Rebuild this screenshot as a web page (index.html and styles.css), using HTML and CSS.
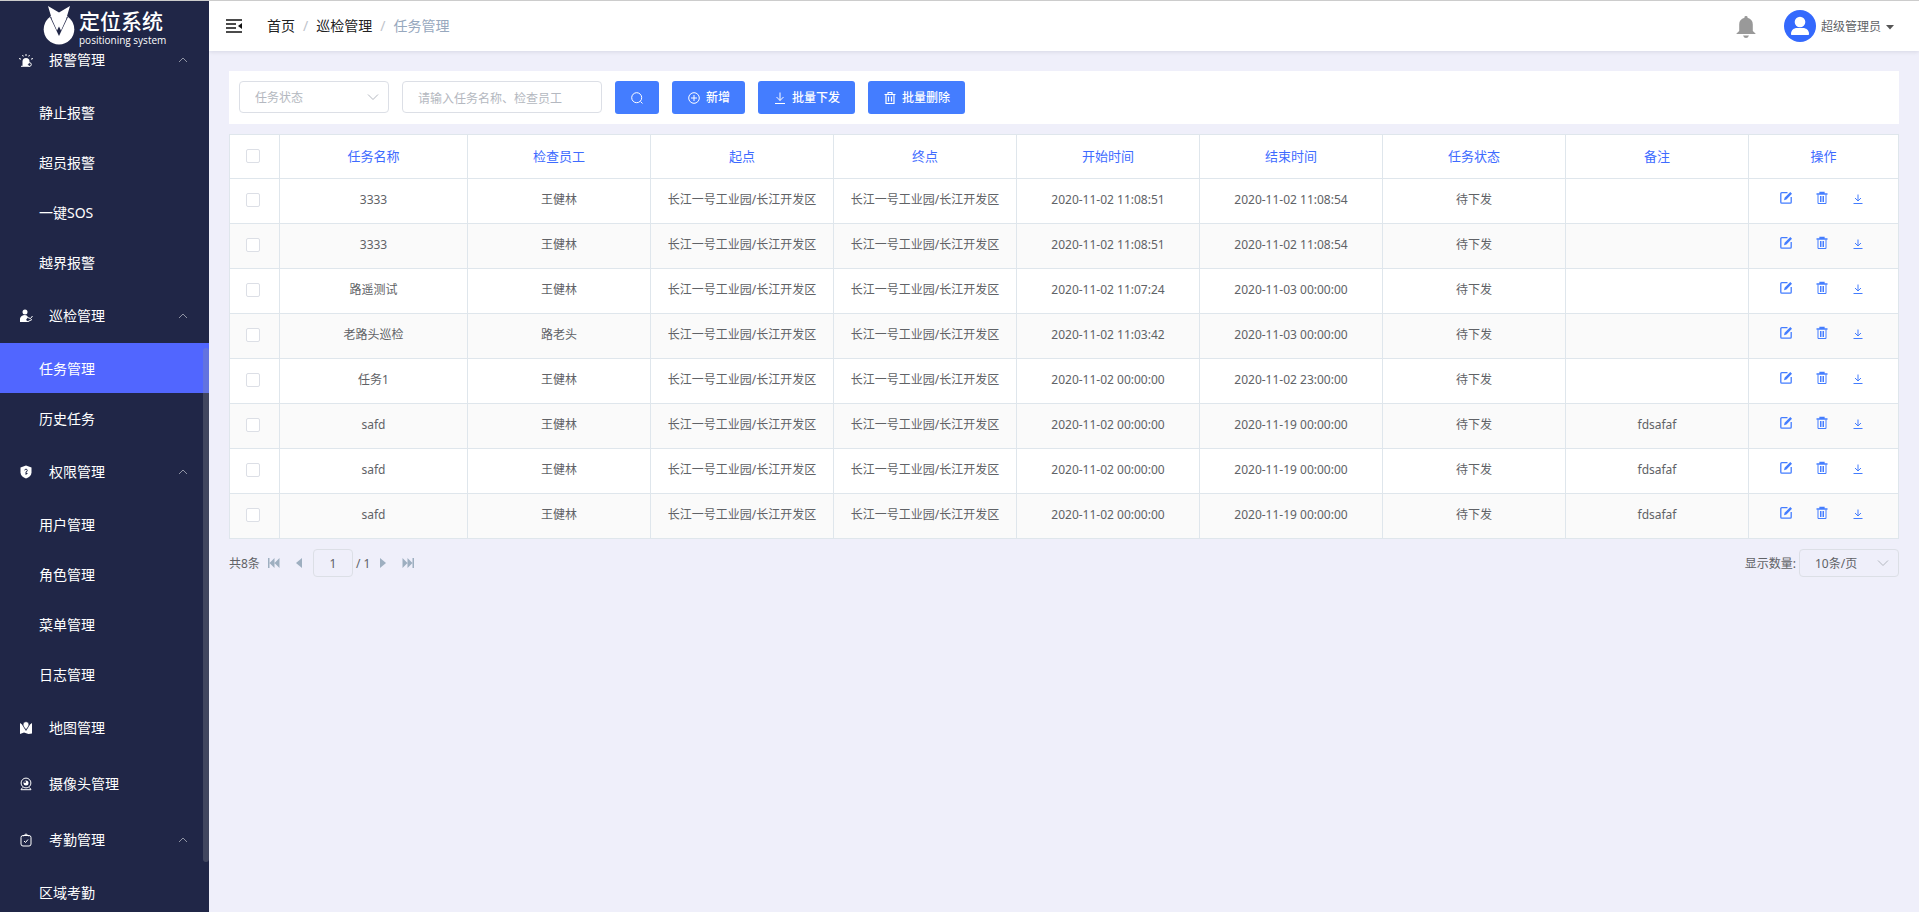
FILE: index.html
```html
<!DOCTYPE html>
<html lang="zh-CN">
<head>
<meta charset="utf-8">
<title>定位系统</title>
<link rel="stylesheet" href="styles.css">
</head>
<body>
<svg class="sprite" aria-hidden="true">
  <symbol id="up" viewBox="0 0 12 12"><path d="M2 8l4-4 4 4" fill="none" stroke="currentColor"/></symbol>
  <symbol id="down" viewBox="0 0 12 12"><path d="M1 3.500l5 5 5-5" fill="none" stroke="currentColor"/></symbol>
  <symbol id="edit" viewBox="0 0 14 14"><path d="M8.500 1.700H2.800a1 1 0 0 0-1 1v8.500a1 1 0 0 0 1 1h8.400a1 1 0 0 0 1-1V6" fill="none" stroke="currentColor" stroke-width="1.300"/><path d="M5 9.200l.6-2.500 5.700-5.600 1.700 1.700-5.600 5.700z" fill="currentColor"/></symbol>
  <symbol id="trash" viewBox="0 0 14 14"><path d="M1.500 3.500h11M5 3.500v-2h4v2M3 3.500v9h8v-9M5.500 5.500v5M8.500 5.500v5" fill="none" stroke="currentColor" stroke-width="1.200"/></symbol>
  <symbol id="bin" viewBox="0 0 14 14"><path d="M1.500 3h11M5 3V1.500h4V3" fill="none" stroke="currentColor" stroke-width="1.300"/><path d="M3 3.500v9h8v-9M5.500 5v6M7 5v6M8.500 5v6" fill="none" stroke="currentColor"/></symbol>
  <symbol id="load" viewBox="0 0 14 14"><path d="M7 1.500v8M3.500 6L7 9.500 10.500 6M2 12.500h10" fill="none" stroke="currentColor"/></symbol>
  <symbol id="send" viewBox="0 0 14 14"><path d="M7 3.500v6M4 7l3 3 3-3M2.500 12.500h9" fill="none" stroke="currentColor"/></symbol>
</svg>
<div class="app">
  <aside class="sidebar">
    <div class="logo">
      <svg class="logo-mark" viewBox="0 0 32 40"><circle cx="16" cy="23.300" r="15.300" fill="#fff"/><path d="M7 11L16 30l9-19z" fill="#202647"/><path d="M5 0l11 6.500L27 0l-4 13.500-5 11-2-4-2 4-5-11z" fill="#fff"/></svg>
      <div class="logo-text"><strong>定位系统</strong><span>positioning system</span></div>
    </div>
    <nav class="menu">
      <a class="group" href="#"><svg class="mi" viewBox="0 0 14 14"><path d="M3.500 13V8.500a3.500 3.500 0 0 1 7 0V13z" fill="#fff"/><path d="M2 13.300h9M7 1v2M3.500 2l.8 1.500M10.500 2l-.8 1.500M0 5.500l2 .7M14 5.500l-2 .7" stroke="#fff"/><circle cx="10.500" cy="11.500" r="1.800" fill="#202647" stroke="#fff"/></svg>报警管理<svg class="arrow"><use href="#up"/></svg></a>
      <a class="item" href="#">静止报警</a>
      <a class="item" href="#">超员报警</a>
      <a class="item" href="#">一键SOS</a>
      <a class="item" href="#">越界报警</a>
      <a class="group" href="#"><svg class="mi" viewBox="0 0 14 14"><circle cx="6" cy="3" r="2.500" fill="#fff"/><path d="M1 13V9.500Q2 6 6 6q2 0 3 2l-2 3 3 2z" fill="#fff"/><path d="M8.500 8.500l3 1 2-2.500M9 12.500l4-2" fill="none" stroke="#fff"/></svg>巡检管理<svg class="arrow"><use href="#up"/></svg></a>
      <a class="item active" href="#">任务管理</a>
      <a class="item" href="#">历史任务</a>
      <a class="group" href="#"><svg class="mi" viewBox="0 0 14 14"><path d="M7 .5l5.500 2v5c0 3-2.500 5-5.500 6-3-1-5.500-3-5.500-6v-5z" fill="#fff"/><path d="M5.700 5.300a1.300 1.300 0 1 1 1.300 1.500v3M7 8.500h1.500" fill="none" stroke="#202647"/></svg>权限管理<svg class="arrow"><use href="#up"/></svg></a>
      <a class="item" href="#">用户管理</a>
      <a class="item" href="#">角色管理</a>
      <a class="item" href="#">菜单管理</a>
      <a class="item" href="#">日志管理</a>
      <a class="group" href="#"><svg class="mi" viewBox="0 0 14 14"><path d="M1 2l2 1.500 4 6.500 4-6.500L13 2v10.500L9.500 13 5 11.500 1 13z" fill="#fff"/><path d="M7 8.500C5 6.500 4.200 5 4.200 3.500a2.800 2.800 0 0 1 5.600 0C9.800 5 9 6.500 7 8.500z" fill="#fff" stroke="#202647" stroke-width=".5"/></svg>地图管理</a>
      <a class="group" href="#"><svg class="mi" viewBox="0 0 14 14"><circle cx="7" cy="6" r="4.900" fill="none" stroke="#fff"/><circle cx="7" cy="6" r="2.500" fill="#fff"/><circle cx="6" cy="5" r="1" fill="#202647"/><path d="M3.500 10.500L2 12.700h10l-1.500-2.200" fill="none" stroke="#fff"/></svg>摄像头管理</a>
      <a class="group" href="#"><svg class="mi" viewBox="0 0 14 14"><rect x="2" y="2.500" width="10" height="10.500" rx="2" fill="none" stroke="#fff"/><path d="M4.500 3L7 .8 9.500 3M5 8l1.500 1.500L9 6.500" fill="none" stroke="#fff"/></svg>考勤管理<svg class="arrow"><use href="#up"/></svg></a>
      <a class="item" href="#">区域考勤</a>
    </nav>
    <div class="thumb"></div>
  </aside>
  <div class="page">
    <header class="topbar">
      <button class="plain fold" aria-label="收起菜单"><svg viewBox="0 0 16 14"><path d="M0 1h16M0 5h10M0 9h10M0 13h16" stroke="#111" stroke-width="1.500"/><path d="M16 4v6l-4-3z" fill="#111"/></svg></button>
      <nav class="crumbs"><a href="#">首页</a><i>/</i><a href="#">巡检管理</a><i>/</i><span>任务管理</span></nav>
      <button class="plain bell" aria-label="通知"><svg viewBox="0 0 20 22"><path d="M10 0a1.500 1.500 0 0 1 1.500 1.800C15 2.700 16.800 5 16.800 8.500V15l2.700 2.500V18H.5v-.5L3.200 15V8.500C3.200 5 5 2.700 8.500 1.800A1.500 1.500 0 0 1 10 0zM7 19.500h6Q12 22 10 22t-3-2.500z" fill="#999"/></svg></button>
      <button class="plain user"><svg class="avatar" viewBox="0 0 32 32"><circle cx="16" cy="16" r="16" fill="#3469fd"/><circle cx="16" cy="12" r="5.300" fill="#fff"/><path d="M7 24c0-4 3-6 6-6h6c3 0 6 2 6 6 0 .7-.4 1-1 1H8c-.6 0-1-.3-1-1z" fill="#fff"/></svg><span>超级管理员</span><svg class="caret" viewBox="0 0 8 6"><path d="M0 1h8L4 5.500z" fill="#555"/></svg></button>
    </header>
    <main class="content">
      <form class="toolbar">
        <div class="select status"><select aria-label="任务状态"><option>任务状态</option></select><svg><use href="#down"/></svg></div>
        <input class="search" type="text" aria-label="关键词" placeholder="请输入任务名称、检查员工">
        <button class="btn" type="button" aria-label="搜索"><svg viewBox="0 0 14 14"><circle cx="6.700" cy="6.700" r="5" fill="none" stroke="#fff"/><path d="M10.500 10.500l2 2" stroke="#fff"/></svg></button>
        <button class="btn" type="button"><svg viewBox="0 0 14 14"><circle cx="7" cy="7" r="5.300" fill="none" stroke="#fff"/><path d="M4 7h6M7 4v6" stroke="#fff"/></svg>新增</button>
        <button class="btn" type="button"><svg><use href="#load"/></svg>批量下发</button>
        <button class="btn" type="button"><svg><use href="#trash"/></svg>批量删除</button>
      </form>
      <table class="grid">
        <colgroup><col class="c-check"><col class="c-name"><col><col><col><col><col><col><col><col class="c-ops"></colgroup>
        <thead><tr><th><input type="checkbox" aria-label="全选"></th><th>任务名称</th><th>检查员工</th><th>起点</th><th>终点</th><th>开始时间</th><th>结束时间</th><th>任务状态</th><th>备注</th><th>操作</th></tr></thead>
        <tbody id="rows"></tbody>
      </table>
      <footer class="pager">
        <span class="total">共8条</span>
        <button class="plain" aria-label="首页"><svg viewBox="0 0 12 10"><path d="M0 0h1.500v10H0zM6.500 0v10L1.500 5zM11.500 0v10l-5-5z"/></svg></button>
        <button class="plain prev" aria-label="上一页"><svg viewBox="0 0 12 10"><path d="M9 0v10L3 5z"/></svg></button>
        <input class="num" type="text" value="1" aria-label="页码">
        <span>/ 1</span>
        <button class="plain next" aria-label="下一页"><svg viewBox="0 0 12 10"><path d="M3 0v10l6-5z"/></svg></button>
        <button class="plain last" aria-label="末页"><svg viewBox="0 0 12 10"><path d="M12 0h-1.500v10H12zM5.500 0v10l5-5zM.5 0v10l5-5z"/></svg></button>
        <label class="size-label" for="size">显示数量:</label>
        <div class="select size"><select id="size"><option>10条/页</option></select><svg><use href="#down"/></svg></div>
      </footer>
    </main>
  </div>
</div>
<script src="rows.js"></script>
</body>
</html>
```
FILE: styles.css
```css
* { box-sizing: border-box; }
body {
  margin: 0;
  font: 12px/18px "Noto Sans", "Noto Sans CJK SC", sans-serif;
  color: #606266;
  background: #efeffa;
}
a { color: inherit; text-decoration: none; }
button, input, select { font: inherit; color: inherit; margin: 0; }
.sprite { display: none; }
.plain { border: 0; padding: 0; background: none; display: flex; align-items: center; }

.app { display: flex; height: 100vh; border-top: 1px solid #ccc; overflow: hidden; }
.sidebar {
  position: relative;
  flex: none;
  width: 209px;
  background: #202647;
  color: #fff;
  font-size: 14px;
  overflow: hidden;
}
.logo { display: flex; gap: 4px; height: 46px; padding: 5px 0 0 43px; }
.logo-mark { width: 32px; height: 40px; }
.logo-text { display: flex; flex-direction: column; gap: 2px; padding-top: 2px; }
.logo-text strong { font: 500 21px/24px "Noto Sans CJK SC", sans-serif; }
.logo-text span { font: 10px/12px "Open Sans", sans-serif; }
.menu { margin-top: -16px; }
.group { display: flex; align-items: center; height: 56px; padding: 2px 20px 0 19px; }
.mi { width: 14px; height: 14px; margin-right: 16px; }
.arrow { width: 12px; height: 12px; margin-left: auto; color: #8f93a3; }
.item { display: flex; align-items: center; height: 50px; padding: 2px 0 0 39px; }
.item.active { background: #5166ff; }
.thumb { position: absolute; right: 0; top: 347px; width: 6px; height: 514px; border-radius: 3px; background: rgba(144, 147, 153, .3); }

.page { flex: 1; min-width: 0; display: flex; flex-direction: column; }
.topbar {
  display: flex;
  align-items: center;
  height: 50px;
  padding: 0 25px 0 17px;
  background: #fff;
  box-shadow: 0 1px 4px rgba(0, 21, 41, .1);
}
.fold svg { width: 16px; height: 14px; }
.crumbs { display: flex; margin: 0 auto 0 25px; font-size: 14px; color: #222; }
.crumbs i { margin: 0 8px; font-style: normal; color: #c0c4cc; }
.crumbs span { color: #97a8be; }
.bell svg { width: 20px; height: 22px; margin: 2px 28px 0 0; }
.user { gap: 5px; }
.user span { padding-top: 2px; }
.avatar { width: 32px; height: 32px; }
.caret { width: 8px; height: 6px; margin-top: 2px; }

.content { padding: 20px; }
.toolbar { display: flex; gap: 13px; padding: 10px; margin-bottom: 10px; background: #fff; }
.select { position: relative; }
.select select {
  width: 100%;
  height: 100%;
  padding: 2px 15px 0;
  appearance: none;
  border: 1px solid #dcdfe6;
  border-radius: 4px;
  background: none;
}
.select svg { position: absolute; right: 10px; top: 50%; width: 12px; height: 12px; margin-top: -6px; color: #b4b8c0; pointer-events: none; }
.status { width: 150px; height: 32px; color: #b4b8c0; }
.search { width: 200px; height: 32px; padding: 2px 15px 0; border: 1px solid #dcdfe6; border-radius: 4px; }
.search::placeholder { color: #b4b8c0; }
.btn {
  display: flex;
  align-items: center;
  gap: 5px;
  height: 33px;
  padding: 0 15px;
  border: 0;
  border-radius: 3px;
  background: #447dff;
  color: #fff;
  font-weight: 500;
}
.btn svg { width: 14px; height: 14px; }

.grid { width: 100%; table-layout: fixed; border-collapse: collapse; background: #fff; text-align: center; }
.grid th, .grid td { height: 45px; padding: 0 0 2px; border: 1px solid #dfe6ec; }
.grid th { height: 44px; font-size: 13px; font-weight: 400; color: #3e6bff; }
.grid tbody tr:nth-child(even) { background: #fafafa; }
.grid th:first-child, .grid td:first-child { padding-right: 3px; }
.c-check { width: 50px; }
.c-name { width: 188px; }
.c-ops { width: 150px; }
.grid input {
  display: block;
  width: 14px;
  height: 14px;
  margin: 0 auto;
  appearance: none;
  border: 1px solid #dcdfe6;
  border-radius: 2px;
  background: #fff;
}
.ops { display: flex; justify-content: center; gap: 22px; padding: 0 3px 4px 0; color: #447dff; }
.ops svg { width: 14px; height: 14px; }

.pager { display: flex; align-items: center; height: 28px; margin-top: 10px; }
.pager > span, .size-label { padding-top: 2px; }
.pager .plain svg { width: 12px; height: 10px; fill: #9eafc0; }
.total { margin-right: 8px; }
.prev { margin-left: 13px; }
.num { width: 40px; height: 28px; margin: 0 3px 0 8px; padding: 0; text-align: center; border: 1px solid #dcdfe6; border-radius: 4px; background: none; }
.next { margin-left: 7px; }
.last { margin-left: 13px; }
.size-label { margin: 0 3px 0 auto; }
.size { width: 100px; height: 28px; }
```
FILE: rows.js
```js
const place = "长江一号工业园/长江开发区";
const tasks = [
  ["3333", "王健林", "2020-11-02 11:08:51", "2020-11-02 11:08:54", ""],
  ["3333", "王健林", "2020-11-02 11:08:51", "2020-11-02 11:08:54", ""],
  ["路遥测试", "王健林", "2020-11-02 11:07:24", "2020-11-03 00:00:00", ""],
  ["老路头巡检", "路老头", "2020-11-02 11:03:42", "2020-11-03 00:00:00", ""],
  ["任务1", "王健林", "2020-11-02 00:00:00", "2020-11-02 23:00:00", ""],
  ["safd", "王健林", "2020-11-02 00:00:00", "2020-11-19 00:00:00", "fdsafaf"],
  ["safd", "王健林", "2020-11-02 00:00:00", "2020-11-19 00:00:00", "fdsafaf"],
  ["safd", "王健林", "2020-11-02 00:00:00", "2020-11-19 00:00:00", "fdsafaf"]
];
const ops = [["edit", "编辑"], ["bin", "删除"], ["send", "下发"]]
  .map(([id, label]) => `<button class="plain" aria-label="${label}"><svg><use href="#${id}"/></svg></button>`)
  .join("");
document.getElementById("rows").innerHTML = tasks.map(([name, staff, start, end, note]) => {
  const cells = [name, staff, place, place, start, end, "待下发", note].map(t => `<td>${t}</td>`).join("");
  return `<tr><td><input type="checkbox" aria-label="选择"></td>${cells}<td><div class="ops">${ops}</div></td></tr>`;
}).join("");
```
